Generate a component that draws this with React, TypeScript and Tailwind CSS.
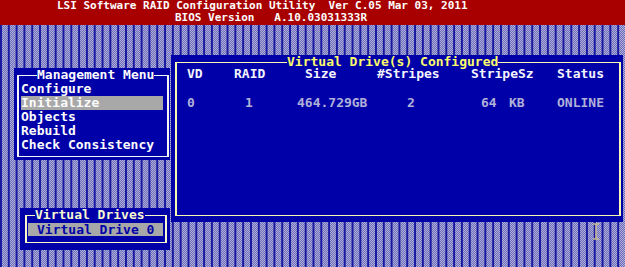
import React from "react";

const menuItems = ["Configure", "Initialize", "Objects", "Rebuild", "Check Consistency"];

export default function App() {
  return (
    <div className="w-[625px] h-[267px] overflow-hidden bg-[#0000a8] font-['DejaVu_Sans_Mono',monospace] font-bold">
      <header className="h-[25px] bg-[#a80000] text-[#fcfcfc] text-[11px] leading-[12px] whitespace-pre">
        <div className="pl-[57px]">LSI Software RAID Configuration Utility  Ver C.05 Mar 03, 2011</div>
        <div className="pl-[175px]">BIOS Version   A.10.03031333R</div>
      </header>

      <main className="relative flex h-[242px] bg-[image:linear-gradient(to_right,#1818a0_0_2px,transparent_2px),conic-gradient(#b0b0d4_25%,#6c6cc0_0_50%,#b0b0d4_0_75%,#6c6cc0_0)] bg-[length:7.8125px_100%,2px_2px] text-[13px] leading-[14px]">
        <div className="flex w-[171px] shrink-0 flex-col">
          <section className="ml-[14px] mt-[43px] h-[92px] w-[156px] bg-[#0000a8] pb-[3px] pl-[3px] pr-[1px] pt-[7px]">
            <div className="relative h-full border-x-2 border-y border-[#f4f4f4]">
              <span className="absolute left-[18px] top-[-7px] bg-[#0000a8] leading-[12px] text-[#fcfcfc] whitespace-pre">Management Menu</span>
              <ul className="pl-[2px] pt-[6px]">
                {menuItems.map((m) => (
                  <li
                    key={m}
                    className={
                      m === "Initialize"
                        ? "h-[14px] w-[142px] bg-[#a8a8a8] text-[#fcfcfc] whitespace-pre"
                        : "h-[14px] text-[#fcfcfc] whitespace-pre"
                    }
                  >
                    {m}
                  </li>
                ))}
              </ul>
            </div>
          </section>

          <section className="ml-[20px] mt-[48px] h-[42px] w-[150px] bg-[#0000a8] pb-[7px] pl-[5px] pr-[3px] pt-[7px]">
            <div className="relative h-full border-x-2 border-y border-[#f8f8c8]">
              <span className="absolute left-[8px] top-[-7px] bg-[#0000a8] leading-[12px] text-[#f8f8d0] whitespace-pre">Virtual Drives</span>
              <div className="ml-[1px] mt-[7px] h-[13px] w-[135px] bg-[#a8a8a8] pl-[9px] leading-[13px] text-[#0000a8] whitespace-pre">
                Virtual Drive 0
              </div>
            </div>
          </section>
        </div>

        <section className="mt-[30px] h-[167px] w-[452px] bg-[#0000a8] pb-[6px] pl-[4px] pr-[2px] pt-[7px]">
          <div className="relative h-full border-x-2 border-y border-[#f8f8b0]">
            <span className="absolute left-[110px] top-[-7px] bg-[#0000a8] leading-[12px] text-[#fcfc6c] whitespace-pre">Virtual Drive(s) Configured</span>
            <div className="mt-[5px] flex pl-[10px] leading-[12px] text-[#f4f4fc] whitespace-pre">
              <span className="w-[47px]">VD</span>
              <span className="w-[71px]">RAID</span>
              <span className="w-[72px]">Size</span>
              <span className="w-[94px]">#Stripes</span>
              <span className="w-[86px]">StripeSz</span>
              <span>Status</span>
            </div>
            <div className="mt-[16px] flex pl-[10px] text-[#b0b0d8] whitespace-pre">
              <span className="w-[58px]">0</span>
              <span className="w-[52px]">1</span>
              <span className="w-[110px]">464.729GB</span>
              <span className="w-[74px]">2</span>
              <span className="w-[28px]">64</span>
              <span className="w-[48px]">KB</span>
              <span>ONLINE</span>
            </div>
          </div>
        </section>

        <svg className="absolute left-[592px] top-[198px]" width="8" height="17" viewBox="0 0 8 17">
          <path d="M1 1h6M4 1v15M1 16h6" stroke="#c8bc94" strokeWidth="1.5" fill="none" />
        </svg>
      </main>
    </div>
  );
}
